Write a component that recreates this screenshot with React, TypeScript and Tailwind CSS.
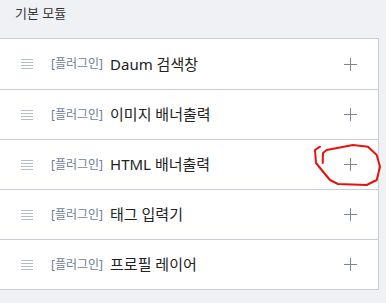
import React from "react";

const modules = [
  "Daum 검색창",
  "이미지 배너출력",
  "HTML 배너출력",
  "태그 입력기",
  "프로필 레이어",
];

function Handle() {
  return (
    <div className="flex w-[12px] flex-col gap-[2px]">
      <span className="h-px bg-[#b4bcc8]" />
      <span className="h-px bg-[#b4bcc8]" />
      <span className="h-px bg-[#b4bcc8]" />
      <span className="h-px bg-[#b4bcc8]" />
    </div>
  );
}

function Plus() {
  return (
    <svg width="13" height="13" viewBox="0 0 13 13" className="text-[#7c8594]">
      <path d="M6.5 0v13M0 6.5h13" stroke="currentColor" strokeWidth="1" />
    </svg>
  );
}

export default function App() {
  return (
    <div
      className="relative h-[303px] w-[386px] overflow-hidden bg-[#eff1f5]"
      style={{ fontFamily: '"Noto Sans", "Noto Sans CJK KR", sans-serif' }}
    >
      <h2 className="h-[38px] pl-[15px] pt-[4px] text-[13px] text-[#333]">기본 모듈</h2>

      <ul className="-ml-px w-[380px] border border-[#c8ced8] bg-white">
        {modules.map((name, i) => (
          <li
            key={name}
            className={
              "flex h-[50px] items-center pl-[21px] pr-[21px] " +
              (i > 0 ? "border-t border-[#c8ced8]" : "")
            }
          >
            <Handle />
            <span className="ml-[18px] text-[12px] text-[#6f7d95]">[플러그인]</span>
            <span className="ml-[7px] text-[15px] text-[#222]">{name}</span>
            <span className="ml-auto flex">
              <Plus />
            </span>
          </li>
        ))}
      </ul>

      {/* red annotation */}
      <svg
        className="pointer-events-none absolute left-0 top-0"
        width="386"
        height="303"
        viewBox="0 0 386 303"
      >
        <path
          d="M320 146.7 L315 150 L316 163 L321.7 170 L330 180 L338 184 L366.7 185 L376.7 180 L380 166.7 L376.7 155 L368 146.7 L353 145 L326.7 150 L323 153 L322.7 163"
          fill="none"
          stroke="#e8120c"
          strokeWidth="2"
          strokeLinejoin="round"
          strokeLinecap="round"
        />
      </svg>
    </div>
  );
}
